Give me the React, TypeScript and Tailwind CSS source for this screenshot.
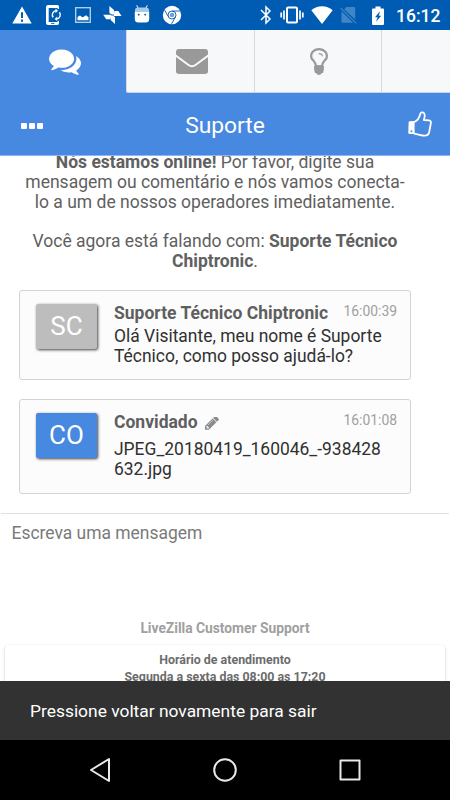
import type { ReactNode } from "react";

interface IconProps {
    className?: string;
}

interface MessageProps {
    initials: string;
    name: string;
    time: string;
    lines: string[];
    own?: boolean;
}

const WarningIcon = () => (
    <svg viewBox="0 0 20 18" className="w-5 h-[18px]" fill="currentColor">
        <path fillRule="evenodd" d="M10 .5 19.7 17.5H.3ZM9 6.2V12h2V6.2ZM9 13.6v2.1h2v-2.1Z" />
    </svg>
);

const PhoneSyncIcon = () => (
    <svg viewBox="0 0 17 20" className="w-[17px] h-5" fill="none" stroke="currentColor">
        <path d="M2 0h9.5A1.7 1.7 0 0 1 13 1.7V4H11.6V3H2.7v14h8.900v-1H13v2.2a1.8 1.8 0 0 1-1.7 1.8H2a2 2 0 0 1-2-2V2a2 2 0 0 1 2-2Z" fill="currentColor" stroke="none" />
        <path d="M5 18.4h3.5" stroke="#005cb2" strokeWidth=".9" />
        <path d="M7.2 12.3A4.1 4.1 0 0 1 10 5.7M13.4 7.3A4.1 4.1 0 0 1 10.6 13.9" strokeWidth="1.4" />
        <path d="M9.5 3.4v4.5L12 5.7ZM11.2 11.6v4.5L8.6 13.9Z" fill="currentColor" stroke="none" />
    </svg>
);

const ImageIcon = () => (
    <svg viewBox="0 0 16 16" className="size-4" fill="none">
        <rect x=".7" y=".7" width="14.6" height="14.6" stroke="#b9d4ec" strokeWidth="1.3" />
        <path d="M2.500 13.300V10l2.500-1.500 2.300 1.800 1-.2L11 8.300l2.500 1.900v3.100Z" fill="#fff" />
    </svg>
);

const PinwheelIcon = () => (
    <svg viewBox="0 0 20 20" className="size-5" fill="currentColor">
        <path d="M7.400 1 12 5V9.600H9.900L7.400 8ZM12.400 6H16.300L19.600 10.900H11.700ZM13 19 8.700 15V10.600H11L13 12.300ZM1.200 9.800H9.200L8.200 14.300H4.200Z" />
    </svg>
);

const RobotIcon = () => (
    <svg viewBox="0 0 16 18" className="w-4 h-[18px]" fill="#fff">
        <path d="M2.7.3 4.3 3.5M13.3.3 11.7 3.5" stroke="#fff" strokeWidth="1" />
        <path d="M1 6.500V5C1 3.300 2.800 2.600 4.500 2.600h7C13.200 2.600 15 3.300 15 5v1.500Z" fill="#a5cae8" />
        <path fillRule="evenodd" d="M.8 6.500h14.400V14c0 2.500-1.300 3.500-3.500 3.500H4.300C2.100 17.500.8 16.500.8 14ZM4.800 8.700a.9.900 0 1 0 .01 0ZM11.200 8.700a.9.900 0 1 0 .01 0Z" />
    </svg>
);

const ChromeIcon = () => (
    <svg viewBox="0 0 20 20" className="size-5">
        <circle cx="10" cy="10" r="9.2" fill="#fff" />
        <g fill="none" stroke="#005cb2" strokeWidth=".9">
            <circle cx="10" cy="10" r="4" />
            <path d="M10 6h8.200M6.600 12 2.500 5M13.400 12 9.600 18.900" />
        </g>
        <circle cx="10" cy="10" r="2.3" fill="#6f9fd0" />
    </svg>
);

const BluetoothIcon = () => (
    <svg viewBox="0 0 12 20" className="w-3 h-5" fill="none" stroke="currentColor" strokeWidth="1.5">
        <path d="m1 5 9 9-4 4V2l4 4-9 9" />
    </svg>
);

const VibrateIcon = () => (
    <svg viewBox="0 0 24 18" className="w-6 h-[18px]" fill="none" stroke="currentColor">
        <rect x="7" y="1.5" width="10" height="15" rx="1" strokeWidth="2" />
        <path d="M4 4.500v9M1.200 6.500v5M20 4.500v9M22.800 6.500v5" strokeWidth="1.7" />
    </svg>
);

const WifiIcon = () => (
    <svg viewBox="0 0 22 18" className="w-[22px] h-[18px]" fill="currentColor">
        <path d="M11 18 .3 4.200C3.500 1.500 7 .2 11 .2s7.500 1.300 10.700 4Z" />
    </svg>
);

const NoSimIcon = () => (
    <svg viewBox="0 0 17 18" className="w-[17px] h-[18px]" fill="#4085c6">
        <path d="M6.500 1H14a1.200 1.200 0 0 1 1.200 1.200v11.300L4.200 3.200ZM1.500 5.200l11.600 11.600H2.700a1.200 1.200 0 0 1-1.200-1.200Z" />
        <path d="m.6 1.800 15.600 15.600" stroke="#4085c6" strokeWidth="1.2" />
    </svg>
);

const BatteryIcon = () => (
    <svg viewBox="0 0 12 19" className="w-3 h-[19px]" fill="currentColor">
        <path fillRule="evenodd" d="M3.500.500h5v2H11a1 1 0 0 1 1 1V18a1 1 0 0 1-1 1H1a1 1 0 0 1-1-1V3.500a1 1 0 0 1 1-1h2.500ZM8 5.300 3 11.200h2.600L4 15.700l5.200-6H6.800Z" />
    </svg>
);

const CommentsIcon = ({ className }: IconProps) => (
    <svg viewBox="0 0 1792 1792" className={className} fill="currentColor">
        <path d="M1408 768q0 139-94 257t-256.500 186.500-353.500 68.500q-86 0-176-16-124 88-278 128-36 9-86 16h-3q-11 0-20.500-8t-11.500-21q-1-3-1-6.500t.5-6.500 2-6l2.500-5 3.500-5.500 4-5 4.500-5 4-4.500q5-6 23-25t26-29.500 22.500-29 25-38.500 20.500-44q-124-72-195-177t-71-224q0-139 94-257t256.500-186.500 353.500-68.500 353.500 68.500 256.500 186.500 94 257zm384 256q0 120-71 224.500t-195 176.500q10 24 20.500 44t25 38.500 22.500 29 26 29.500 23 25q1 1 4 4.500t4.500 5 4 5 3.500 5.500l2.500 5 2 6 .5 6.500-1 6.500q-3 14-13 22t-22 7q-50-7-86-16-154-40-278-128-90 16-176 16-271 0-472-132 58 4 88 4 161 0 309-45t264-129q125-92 192-212t67-254q0-77-23-152 129 71 204 178t75 230z" />
    </svg>
);

const EnvelopeIcon = ({ className }: IconProps) => (
    <svg viewBox="0 0 32 25" className={className}>
        <rect x="0" y="0" width="32" height="25" rx="3" fill="currentColor" />
        <path d="M-1 6 12.200 15.700C15 17.900 17 17.900 19.800 15.700L33 6" fill="none" stroke="#f7f8fa" strokeWidth="2" />
    </svg>
);

const BulbIcon = ({ className }: IconProps) => (
    <svg viewBox="384 128 1024 1536" className={className} fill="currentColor">
        <path d="M1120 576q0 13-9.500 22.500t-22.500 9.500-22.500-9.500-9.500-22.500q0-46-54-71t-106-25q-13 0-22.500-9.500t-9.500-22.500 9.500-22.500 22.500-9.500q50 0 99.500 16t87 54 37.500 90zm160 0q0-72-34.500-134t-90-101.500-123-62-136.500-22.500-136.500 22.500-123 62-90 101.500-34.500 134q0 101 68 180 10 11 30.500 33t30.500 33q128 153 141 298h228q13-145 141-298 10-11 30.500-33t30.500-33q68-79 68-180zm128 0q0 155-103 268-45 49-74.500 87t-59.500 95.500-34 107.500q47 28 47 82 0 37-25 64 25 27 25 64 0 52-45 81 13 23 13 47 0 46-31.500 71t-77.500 25q-20 44-60 70t-87 26-87-26-60-70q-46 0-77.500-25t-31.500-71q0-24 13-47-45-29-45-81 0-37 25-64-25-27-25-64 0-54 47-82-4-50-34-107.500t-59.500-95.500-74.500-87q-103-113-103-268 0-99 44.500-184.500t117-142 164-89 186.500-32.500 186.500 32.500 164 89 117 142 44.500 184.500z" />
        <path d="M720 1110h352l40 100-20 230-90 120H790l-90-120-20-230Z" />
    </svg>
);

const ThumbIcon = ({ className }: IconProps) => (
    <svg viewBox="0 0 24 26" className={className} fill="none" stroke="currentColor" strokeLinecap="round" strokeLinejoin="round">
        <path d="M6.300 11C9.800 9.500 11.400 6.700 12.200 3.300c.4-1.700 1.500-2.200 2.700-1.900 2.300.7 2.300 3.800.9 7.600l5.200.3c1.500.2 2.100 1.200 1.900 2.700l-1.700 9c-.5 2.500-2.300 3.600-4.400 3.600-3.300.1-5.900-1.300-10.500-1.900" strokeWidth="1.8" />
        <path fillRule="evenodd" d="M1.800 10.200 6.600 10v13H1.700a1.400 1.400 0 0 1-1.400-1.500L.6 11.400a1.200 1.200 0 0 1 1.200-1.200ZM3.400 19.300a.9.900 0 1 0 .01 0Z" fill="currentColor" stroke="none" />
    </svg>
);

const PencilIcon = ({ className }: IconProps) => (
    <svg viewBox="128 256 1536 1536" className={className} fill="currentColor">
        <path d="M491 1536l91-91-235-235-91 91v107h128v128h107zm523-928q0-22-22-22-10 0-17 7l-542 542q-7 7-7 17 0 22 22 22 10 0 17-7l542-542q7-7 7-17zm-54-192l416 416-832 832h-416v-416zm683 96q0 53-37 90l-166 166-416-416 166-165q36-38 90-38 53 0 91 38l235 234q37 39 37 91z" />
    </svg>
);

const StatusBar = () => (
    <div className="flex h-[30px] shrink-0 items-center bg-[#005cb2] pl-[12px] pr-[10px] text-white">
        <div className="flex items-center">
            <WarningIcon />
            <div className="ml-[14px]"><PhoneSyncIcon /></div>
            <div className="ml-[12px]"><ImageIcon /></div>
            <div className="ml-[11px]"><PinwheelIcon /></div>
            <div className="ml-[12px] pb-[3px]"><RobotIcon /></div>
            <div className="ml-[12px]"><ChromeIcon /></div>
        </div>
        <div className="ml-auto flex items-center">
            <BluetoothIcon />
            <div className="ml-[8px]"><VibrateIcon /></div>
            <div className="ml-[7px]"><WifiIcon /></div>
            <div className="ml-[7px]"><NoSimIcon /></div>
            <div className="ml-[15px]"><BatteryIcon /></div>
            <span className="ml-[12px] w-[44px] pt-px text-[17.5px] leading-[30px] font-medium whitespace-nowrap">16:12</span>
        </div>
    </div>
);

const Tab = ({ children, className }: { children?: ReactNode; className: string }) => (
    <div className={`flex items-center justify-center border-b border-l border-b-[#c3d6f1] border-l-[#d6d8db] bg-[#f7f8fa] text-[#999] ${className}`}>
        {children}
    </div>
);

const Message = ({ initials, name, time, lines, own }: MessageProps) => (
    <div className={`flex rounded-[3px] border border-[#d3d3d3] bg-[#fcfcfc] pl-4 pr-[13px] pt-3 ${own ? "h-[95px]" : "h-[90px]"}`}>
        <div className={`mt-px mr-px flex h-[45px] w-[61px] shrink-0 items-center justify-center rounded-[2px] text-[26px] text-white shadow-[1px_1px_3px_rgba(0,0,0,0.75)] ${own ? "bg-[#4788e0]" : "bg-[#bdbdbd]"}`}>
            {initials}
        </div>
        <div className="ml-4 min-w-0 flex-1">
            <div className="flex justify-between whitespace-nowrap">
                <span className="flex items-center text-[17.5px] leading-5 font-bold text-[#5f5f5f]">
                    {name}
                    {own && <PencilIcon className="ml-[7px] mt-1 size-[14px] text-[#8a8a8a]" />}
                </span>
                <span className="text-[13.9px] leading-[17px] text-[#a0a0a0]">{time}</span>
            </div>
            <div className={`text-[17.45px] leading-5 whitespace-nowrap text-[#303030] ${own ? "mt-[7px]" : "mt-[3px]"}`}>
                {lines.map((line) => (
                    <p key={line}>{line}</p>
                ))}
            </div>
        </div>
    </div>
);

const App = () => {
    return (
        <div className="flex h-[800px] w-[450px] flex-col overflow-hidden bg-white font-[Roboto,sans-serif]">
            <StatusBar />
            <header className="h-[126px] shrink-0 border-b border-[#8fb7ec] bg-[#4788e0] text-white">
                <nav className="flex h-[63px]">
                    <div className="flex w-[126px] items-center justify-center">
                        <CommentsIcon className="mb-px ml-[3px] size-8" />
                    </div>
                    <Tab className="w-[128px] rounded-bl-[2px]"><EnvelopeIcon className="ml-[3px] h-[25px] w-8" /></Tab>
                    <Tab className="w-[127px]"><BulbIcon className="ml-[2px] h-[27px] w-[18px]" /></Tab>
                    <Tab className="flex-1" />
                </nav>
                <div className="flex h-[62px] items-center justify-between pl-[21px] pr-[18px]">
                    <div className="flex w-6 gap-[2px] pt-1">
                        <i className="size-[6px] rounded-[1px] bg-white" />
                        <i className="size-[6px] rounded-[1px] bg-white" />
                        <i className="size-[6px] rounded-[1px] bg-white" />
                    </div>
                    <h1 className="pt-[3px] pr-[3px] text-[22.8px] leading-8">Suporte</h1>
                    <ThumbIcon className="h-[26px] w-6" />
                </div>
            </header>

            <main className="flex h-[357px] shrink-0 flex-col overflow-hidden">
                <div className="-mt-1 w-[430px] text-center text-[17.5px] leading-5 whitespace-nowrap text-[#606060]">
                    <p><b>Nós estamos online!</b> Por favor, digite sua</p>
                    <p>mensagem ou comentário e nós vamos conecta-</p>
                    <p>lo a um de nossos operadores imediatamente.</p>
                    <p className="mt-[19px]">Você agora está falando com: <b>Suporte Técnico</b></p>
                    <p><b>Chiptronic</b>.</p>
                </div>
                <div className="mt-[19px] ml-[19px] flex w-[392px] flex-col gap-[19px]">
                    <Message
                        initials="SC"
                        name="Suporte Técnico Chiptronic"
                        time="16:00:39"
                        lines={["Olá Visitante, meu nome é Suporte", "Técnico, como posso ajudá-lo?"]}
                    />
                    <Message
                        initials="CO"
                        name="Convidado"
                        time="16:01:08"
                        lines={["JPEG_20180419_160046_-938428", "632.jpg"]}
                        own
                    />
                </div>
            </main>

            <section className="mx-px h-[168px] shrink-0 overflow-hidden border-t border-[#e0e0e0]">
                <p className="pt-[9px] pl-[10.5px] text-[17.45px] leading-5 text-[#7a7a7a]">Escreva uma mensagem</p>
                <p className="mt-[77px] text-center text-[13.8px] leading-4 font-bold text-[#a0a0a0]">LiveZilla Customer Support</p>
                <div className="mx-[4px] mt-[9px] h-[60px] rounded-[4px] pt-[6px] text-center text-[12.4px] leading-[17px] font-bold text-[#6c6c6c] shadow-[0_1px_3px_rgba(0,0,0,0.22)]">
                    <p>Horário de atendimento</p>
                    <p>Segunda a sexta das 08:00 as 17:20</p>
                </div>
            </section>

            <div className="flex h-[59px] shrink-0 items-center bg-[#323232] pt-[2px] pl-[30px] text-[17.4px] text-white">
                Pressione voltar novamente para sair
            </div>
            <nav className="flex h-[60px] shrink-0 items-center justify-between bg-black px-[87px] text-[#e8e8e8]">
                <svg viewBox="0 0 26 26" className="size-[26px]" fill="none" stroke="currentColor" strokeWidth="2" strokeLinejoin="round">
                    <path d="M22 2v22L4 13Z" />
                </svg>
                <svg viewBox="0 0 26 26" className="size-[26px]" fill="none" stroke="currentColor" strokeWidth="2">
                    <circle cx="13" cy="13" r="10.8" />
                </svg>
                <svg viewBox="0 0 26 26" className="size-[26px]" fill="none" stroke="currentColor" strokeWidth="2" strokeLinejoin="round">
                    <rect x="3.5" y="3.5" width="19" height="19" />
                </svg>
            </nav>
        </div>
    );
};

export default App;
